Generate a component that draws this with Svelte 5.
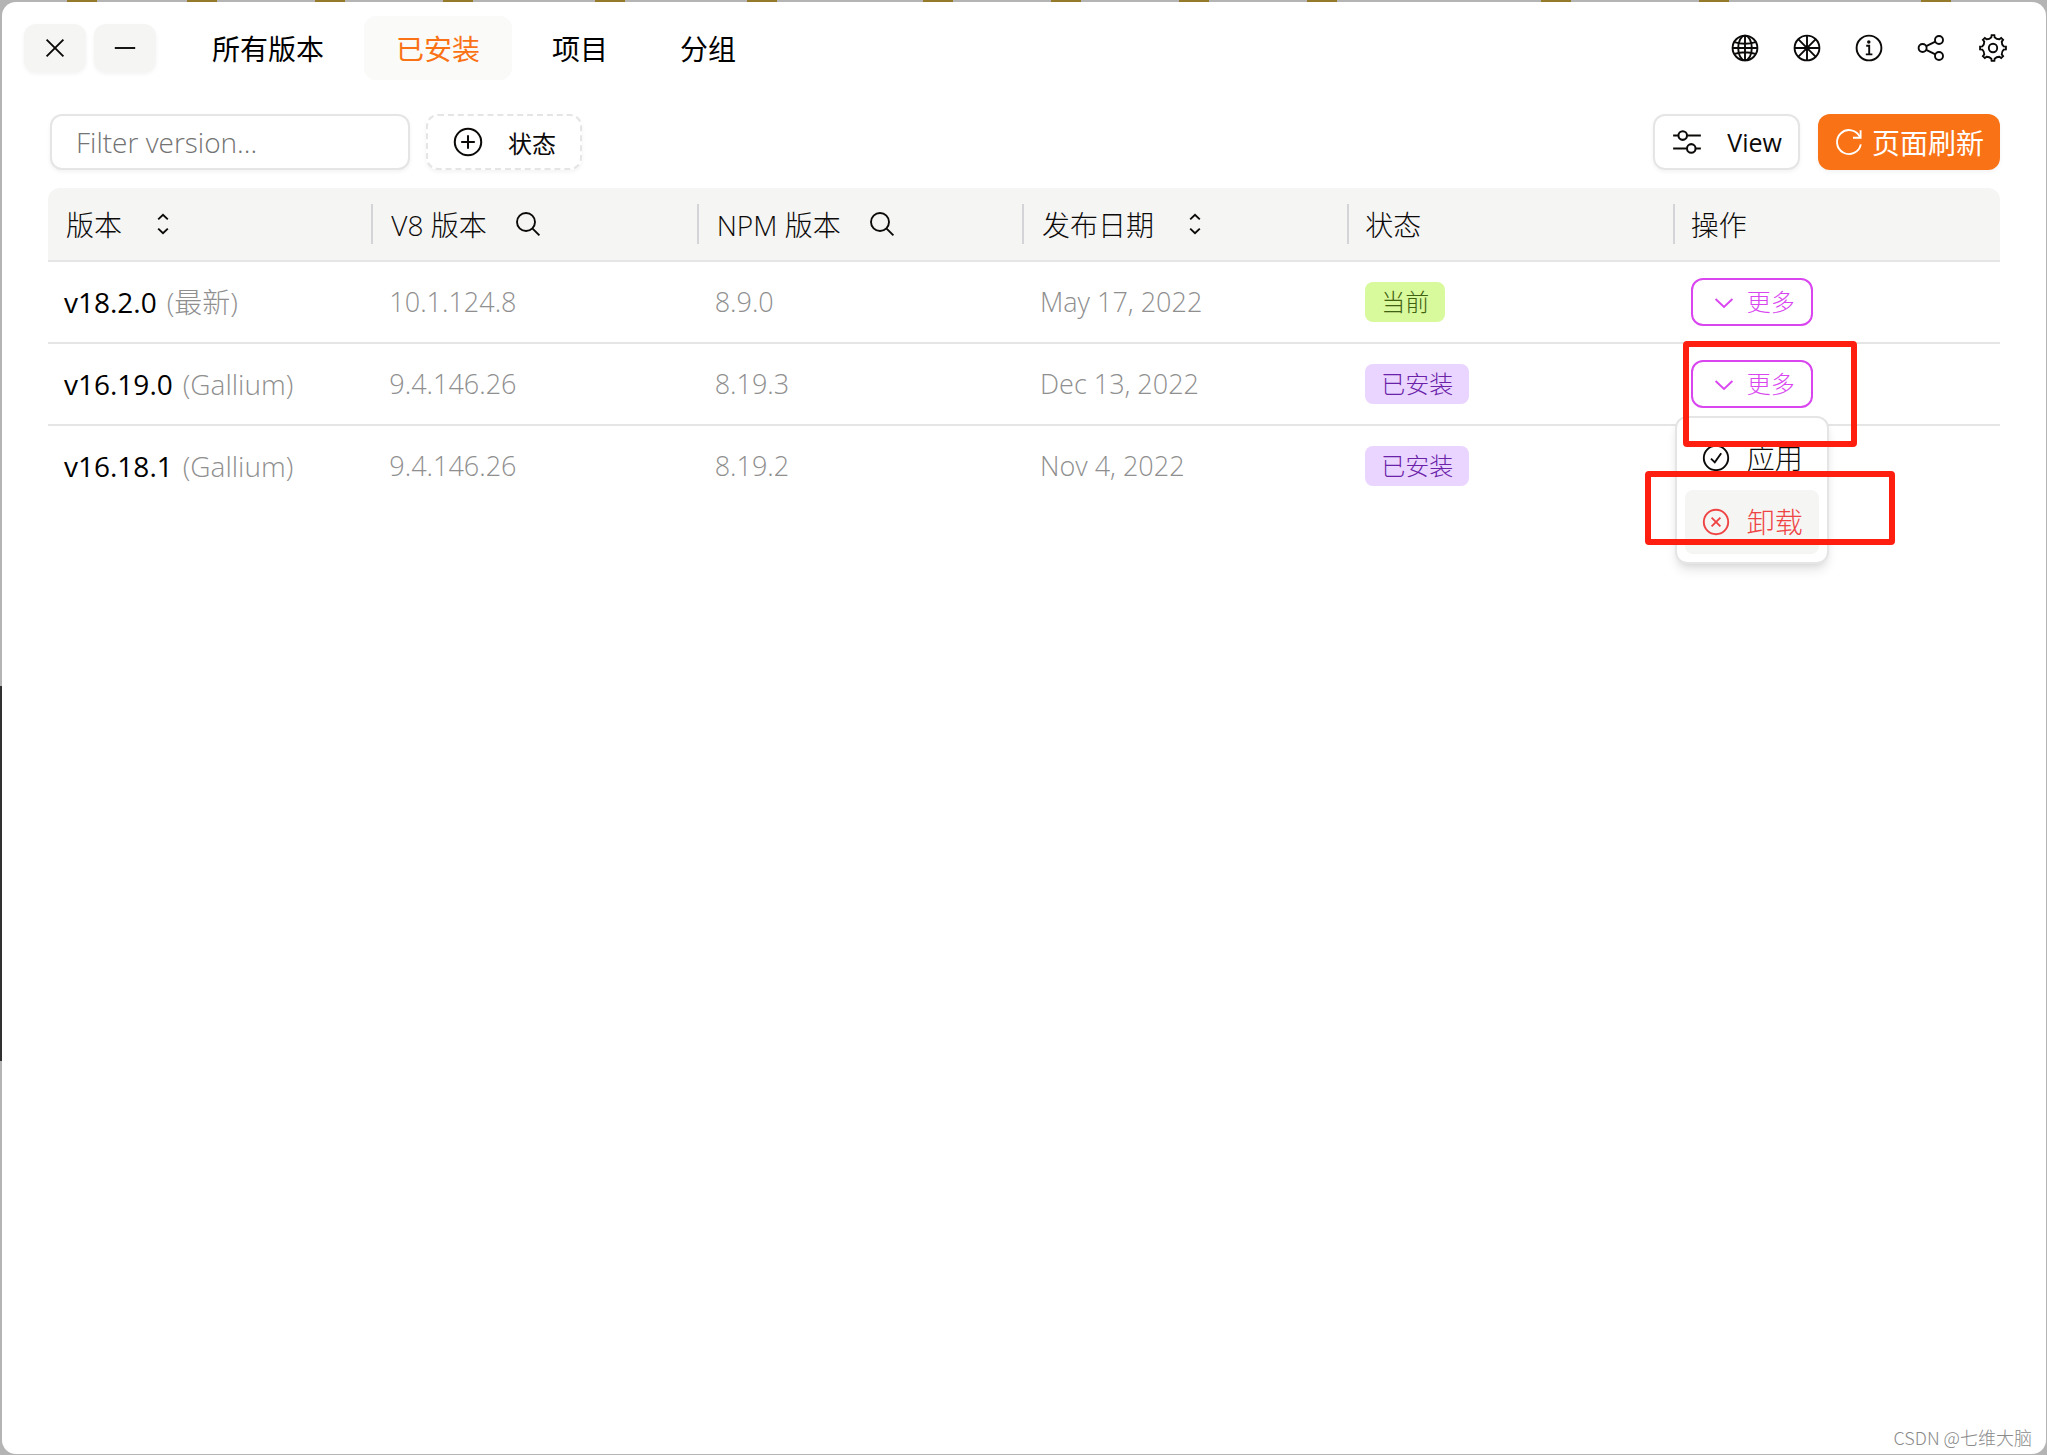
<script>
  let tab = 'installed';
  let filter = '';
  let openMenu = 'v16.19.0';

  const tabs = [
    { id: 'all', label: '所有版本' },
    { id: 'installed', label: '已安装' },
    { id: 'projects', label: '项目' },
    { id: 'groups', label: '分组' },
  ];

  const tools = [
    { id: 'globe', label: 'Language' },
    { id: 'wheel', label: 'Theme' },
    { id: 'info', label: 'About' },
    { id: 'share', label: 'Share' },
    { id: 'gear', label: 'Settings' },
  ];

  const columns = [
    { label: '版本', icon: 'sort' },
    { label: 'V8 版本', icon: 'search' },
    { label: 'NPM 版本', icon: 'search' },
    { label: '发布日期', icon: 'sort' },
    { label: '状态' },
    { label: '操作' },
  ];

  const versions = [
    { version: 'v18.2.0', name: '最新', v8: '10.1.124.8', npm: '8.9.0', date: 'May 17, 2022', status: 'current' },
    { version: 'v16.19.0', name: 'Gallium', v8: '9.4.146.26', npm: '8.19.3', date: 'Dec 13, 2022', status: 'installed' },
    { version: 'v16.18.1', name: 'Gallium', v8: '9.4.146.26', npm: '8.19.2', date: 'Nov 4, 2022', status: 'installed' },
  ];

  const statusLabel = { current: '当前', installed: '已安装' };

  $: rows = versions.filter((v) => v.version.includes(filter.trim()));
  // an open menu lies over the next row's button
  $: coveredRow = openMenu ? rows.findIndex((r) => r.version === openMenu) + 1 : 0;

  // eight teeth around a 15x15 box
  function gearPath() {
    const pt = (r, deg) => {
      const a = (deg * Math.PI) / 180;
      return `${(7.5 + r * Math.cos(a)).toFixed(2)} ${(7.5 + r * Math.sin(a)).toFixed(2)}`;
    };
    let d = '';
    for (let i = 0; i < 8; i++) {
      const a = i * 45;
      d += `${i ? 'L' : 'M'}${pt(5.4, a - 9)} L${pt(6.5, a - 6)} L${pt(6.5, a + 6)} L${pt(5.4, a + 9)} Q${pt(4.7, a + 22.5)} ${pt(5.4, a + 36)} `;
    }
    return d + 'Z';
  }

  const icons = {
    close: '<path d="M3.3 3.3l8.4 8.4M11.7 3.3l-8.4 8.4"/>',
    minus: '<path d="M2.4 7.5h10.2"/>',
    globe: '<circle cx="7.5" cy="7.5" r="6.2"/><ellipse cx="7.5" cy="7.5" rx="3.4" ry="6.2"/><path d="M7.5 1.3v12.4M1.3 7.5h12.4M2.2 4.6q5.3 1.6 10.6 0M2.2 10.4q5.3-1.6 10.6 0"/>',
    wheel: '<circle cx="7.5" cy="7.5" r="6.2"/><path d="M7.5 1.3v12.4M1.3 7.5h12.4M3.1 3.1l8.8 8.8M11.9 3.1l-8.8 8.8"/><circle cx="7.5" cy="7.5" r="0.8" fill="currentColor"/>',
    info: '<circle cx="7.5" cy="7.5" r="6.2"/><path d="M6.1 6.4h1.5v4.2M5.9 10.7h3.3"/><circle cx="7.4" cy="4.5" r="0.4" fill="currentColor"/>',
    share: '<circle cx="3.3" cy="7.5" r="2"/><circle cx="11.5" cy="3.5" r="2"/><circle cx="11.5" cy="11.5" r="2"/><path d="M5.1 6.6l4.6-2.3M5.1 8.4l4.6 2.3"/>',
    gear: `<path d="${gearPath()}"/><circle cx="7.5" cy="7.5" r="2.1"/>`,
    plus: '<circle cx="7.5" cy="7.5" r="6.2"/><path d="M7.5 4.3v6.4M4.3 7.5h6.4"/>',
    sliders: '<path d="M1 4.5h2.4M7.6 4.5h6.4M1 10.5h6.4M11.6 10.5h2.4"/><circle cx="5.5" cy="4.5" r="2"/><circle cx="9.5" cy="10.5" r="2"/>',
    reload: '<path d="M13 5.1A6 6 0 1 0 13.4 8.7"/><path d="M13.3 1.6v3.8H9.5"/>',
    sort: '<path d="M5.1 5.2l2.4-2.3 2.4 2.3M5.1 9.8l2.4 2.3 2.4-2.3"/>',
    search: '<circle cx="6.5" cy="6.5" r="4.5"/><path d="M9.8 9.8l3.4 3.4"/>',
    chevron: '<path d="M3.3 6l4.2 4 4.2-4"/>',
    check: '<circle cx="7.5" cy="7.5" r="6.1"/><path d="M5 7.8l1.9 1.9L10.1 5.1"/>',
    cross: '<circle cx="7.5" cy="7.5" r="6.1"/><path d="M5.3 5.3l4.4 4.4M9.7 5.3l-4.4 4.4"/>',
  };

  function toggle(version) {
    openMenu = openMenu === version ? '' : version;
  }
</script>

{#snippet icon(name)}
  <svg class="icon" viewBox="0 0 15 15" aria-hidden="true">{@html icons[name]}</svg>
{/snippet}

<div class="desktop">
  <div class="window">
    <header>
      <div class="win-btns">
        <button aria-label="Close">{@render icon('close')}</button>
        <button aria-label="Minimize">{@render icon('minus')}</button>
      </div>
      <nav>
        {#each tabs as t}
          <button class="tab" class:active={tab === t.id} on:click={() => (tab = t.id)}>{t.label}</button>
        {/each}
      </nav>
      <div class="tools">
        {#each tools as t}
          <button aria-label={t.label}>{@render icon(t.id)}</button>
        {/each}
      </div>
    </header>

    <main>
      <div class="toolbar">
        <input aria-label="Filter version" bind:value={filter} placeholder="Filter version..." />
        <button class="btn dashed">{@render icon('plus')}状态</button>
        <span class="grow"></span>
        <button class="btn view">{@render icon('sliders')}View</button>
        <button class="btn refresh">{@render icon('reload')}页面刷新</button>
      </div>

      <table>
        <thead>
          <tr>
            {#each columns as col}
              <th scope="col">
                <div class="head" class:plain={!col.icon}>
                  {col.label}
                  {#if col.icon}
                    <button aria-label={col.label}>{@render icon(col.icon)}</button>
                  {/if}
                </div>
              </th>
            {/each}
          </tr>
        </thead>
        <tbody>
          {#each rows as row, i}
            <tr>
              <td>
                <div class="release"><span class="version">{row.version}</span><span>({row.name})</span></div>
              </td>
              <td>{row.v8}</td>
              <td>{row.npm}</td>
              <td>{row.date}</td>
              <td><span class="badge {row.status}">{statusLabel[row.status]}</span></td>
              <td>
                {#if !coveredRow || i !== coveredRow}
                  <div class="dropdown">
                    <button class="more" aria-expanded={openMenu === row.version} on:click={() => toggle(row.version)}>
                      {@render icon('chevron')}更多
                    </button>
                    {#if openMenu === row.version}
                      <div class="menu">
                        <button>{@render icon('check')}应用</button>
                        <button class="danger">{@render icon('cross')}卸载</button>
                      </div>
                      <div class="mark mark-more"></div>
                      <div class="mark mark-remove"></div>
                    {/if}
                  </div>
                {/if}
              </td>
            </tr>
          {/each}
        </tbody>
      </table>
    </main>

    <footer>CSDN @七维大脑</footer>
  </div>
</div>

<style>
  :global(body) { margin: 0; }

  .desktop {
    --gold: linear-gradient(#967a2c, #967a2c);
    min-height: 100vh; box-sizing: border-box; display: flex;
    padding: 2px 1px 1px 2px;
    background:
      var(--gold) 67px 0 / 30px 2px, var(--gold) 187px 0 / 30px 2px,
      var(--gold) 315px 0 / 30px 2px, var(--gold) 443px 0 / 30px 2px,
      var(--gold) 595px 0 / 30px 2px, var(--gold) 747px 0 / 30px 2px,
      var(--gold) 923px 0 / 30px 2px, var(--gold) 1051px 0 / 30px 2px,
      var(--gold) 1179px 0 / 30px 2px, var(--gold) 1307px 0 / 30px 2px,
      var(--gold) 1541px 0 / 30px 2px, var(--gold) 1699px 0 / 30px 2px,
      var(--gold) 1921px 0 / 30px 2px,
      linear-gradient(#303030, #303030) 0 686px / 2px 375px,
      #b4b4b4;
    background-repeat: no-repeat;
    font-family: "Open Sans", "Noto Sans CJK SC", sans-serif;
    font-size: 28px; font-weight: 300; color: #0c0a09;
  }
  .window { flex: 1; display: flex; flex-direction: column; background: #fff; border-radius: 14px; }

  button { font: inherit; color: inherit; background: none; border: none; padding: 0; margin: 0; cursor: pointer; display: flex; align-items: center; white-space: nowrap; }
  .icon { width: 30px; height: 30px; flex-shrink: 0; display: block; fill: none; stroke: currentColor; stroke-width: 0.95; }

  header { display: flex; align-items: center; padding: 14px 38px 0 22px; }
  .win-btns { display: flex; gap: 8px; }
  .win-btns button { width: 62px; height: 48px; justify-content: center; border-radius: 12px; background: #f5f5f4; box-shadow: 0 2px 4px #0000000d; }
  nav { display: flex; gap: 8px; margin-left: 24px; font-weight: 400; }
  .tab { height: 64px; padding: 0 32px; border-radius: 12px; color: #000; }
  .tab.active { background: #fafaf9; color: #f97316; }
  .tools { display: flex; gap: 32px; margin-left: auto; }

  main { flex: 1; padding: 34px 46px 0; }
  .toolbar { display: flex; padding-left: 2px; margin-bottom: 18px; }
  .toolbar input {
    width: 360px; height: 56px; box-sizing: border-box; padding: 0 24px; margin-right: 16px;
    border: 2px solid #e5e5e5; border-radius: 12px; box-shadow: 0 2px 4px #0000000d;
    font: inherit; outline: none; background: #fff;
  }
  .toolbar input::placeholder { color: #737373; opacity: 1; }
  .grow { flex: 1; }
  .btn { height: 56px; box-sizing: border-box; border-radius: 12px; box-shadow: 0 2px 4px #0000000d; font-size: 24px; font-weight: 400; }
  .btn .icon { width: 32px; height: 32px; }
  .dashed { gap: 24px; padding: 0 24px; border: 2px dashed #e5e5e5; }
  .view { gap: 24px; padding: 0 16px; border: 2px solid #e5e5e5; margin-right: 18px; font-size: 25px; }
  .refresh { gap: 8px; padding: 0 16px; background: #f97316; color: #fff; font-size: 28px; }
  .refresh .icon { width: 30px; height: 30px; }

  table { width: 100%; table-layout: fixed; border-collapse: separate; border-spacing: 0; }
  th { height: 72px; padding: 0; background: #f5f5f4; border-bottom: 2px solid #e5e5e5; font-weight: 300; text-align: left; }
  th:first-child { border-top-left-radius: 12px; }
  th:last-child { border-top-right-radius: 12px; }
  .head { display: flex; align-items: center; gap: 26px; height: 40px; padding-left: 18px; border-right: 2px solid #d4d4d8; }
  .head.plain { padding-left: 16px; }
  th:last-child .head { border-right: none; }
  td { height: 80px; padding: 0 16px; border-bottom: 2px solid #e5e5e5; color: #8f8f8f; font-size: 27px; line-height: 40px; white-space: nowrap; }
  tbody tr:last-child td { border-bottom: none; }
  .release { display: flex; gap: 10px; font-size: 28px; }
  .version { color: #000; font-weight: 400; }

  .badge { display: flex; align-items: center; width: max-content; height: 40px; padding: 0 16px; border-radius: 8px; font-size: 24px; }
  .badge.current { background: #d9f99d; color: #3f6212; }
  .badge.installed { background: #e9d5ff; color: #6b21a8; }

  .dropdown { position: relative; width: max-content; }
  .more { height: 48px; box-sizing: border-box; gap: 8px; padding: 0 16px; border: 2px solid #d946ef; border-radius: 12px; color: #d946ef; font-size: 24px; }
  .menu {
    position: absolute; z-index: 1; top: 56px; left: -16px; padding: 8px;
    background: #fff; border: 2px solid #e5e5e5; border-radius: 12px; color: #0c0a09;
    box-shadow: 0 8px 12px -2px #0000001a, 0 4px 8px -4px #0000001a;
  }
  .menu button { height: 64px; gap: 16px; padding: 0 16px; border-radius: 8px; font-size: 28px; }
  .menu .danger { background: #f5f5f4; color: #ef4444; }
  .mark { position: absolute; z-index: 2; box-sizing: border-box; border: 6px solid #ff1f10; border-radius: 4px; pointer-events: none; }
  .mark-more { top: -19px; left: -8px; width: 174px; height: 106px; }
  .mark-remove { top: 111px; left: -46px; width: 250px; height: 74px; }

  footer { padding: 0 14px 4px; text-align: right; font-family: "Noto Sans CJK SC", sans-serif; font-size: 18px; line-height: 26px; color: #8a8a8a; }
</style>
